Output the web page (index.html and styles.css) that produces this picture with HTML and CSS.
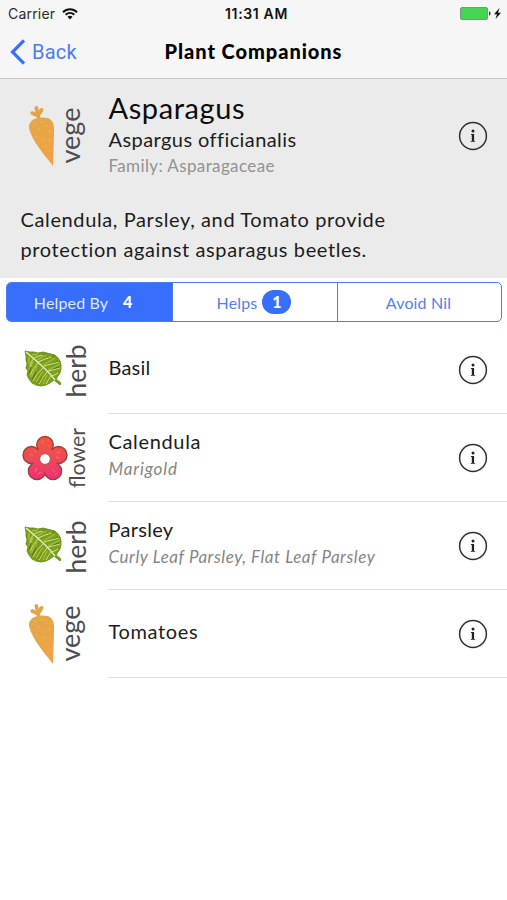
FILE: index.html
```html
<!DOCTYPE html>
<html lang="en">
<head>
<meta charset="utf-8">
<title>Plant Companions</title>
<link rel="stylesheet" href="styles.css">
</head>
<body>
<svg class="defs" width="0" height="0" aria-hidden="true">
  <defs>
    <linearGradient id="petal" x1="0" y1="22" x2="0" y2="66" gradientUnits="userSpaceOnUse">
      <stop offset="0" stop-color="#f4563f"/><stop offset=".5" stop-color="#ee4a55"/><stop offset="1" stop-color="#f02f78"/>
    </linearGradient>
    <linearGradient id="root" x1="0" y1="0" x2="1" y2="1">
      <stop offset="0" stop-color="#dfa94a"/><stop offset="1" stop-color="#f4a044"/>
    </linearGradient>
    <symbol id="carrot" viewBox="0 0 96 88">
      <path d="M38 28C38 25 35 24.500 31 22.500C29.500 20 31 18.500 33.500 19.500L36 20.500C34 17 34 14 36.500 14C38.500 14 38.500 17 38.500 19C39.500 16 42 15 43.500 17C43.500 19.500 41.500 22 40.500 23C39.500 25 40.500 26 41 28Z" fill="#e5a347"/>
      <path d="M30 31C33 25 47 24 51 28C55 32 54 38 54 44L53 74C47 66 36 54 31 42C29 37 28 34 30 31Z" fill="url(#root)"/>
      <path d="M35 31l1 1M42 29l1 2M47 33l-1 1M38 37l2 1M45 41l1-1M50 38l-1 2M36 44l1 1M42 48l2-1M49 47l1 2M45 54l1 1M50 59l-1 1M49 66l1 1" stroke="#f3bd69" stroke-width="1"/>
      <path d="M39 32l1 1M33 36l1 1M48 30l1 1M43 36l1 1M39 42l1 1M47 45l1 1M46 60l1 1M50 54l1 1" stroke="#d6963d" stroke-width=".8"/>
    </symbol>
    <symbol id="leaf" viewBox="0 0 96 88">
      <path d="M25 25L30 26L34 26L38 27L43 26L47 27L51 28L55 29L58 32L60 35L61 39L61 43L60 47L58 50L56 53L61 57L60 59L54 54L50 57L46 59L41 60L36 59L32 57L29 53L27 49L28 45L26 42L27 38L26 34L26 30Z" fill="#7c9f1c" stroke="#5f8214" stroke-width=".8"/>
      <path d="M29 31v7M33 36l-4 8M37 40l-6 11M43 45l-7 11M47 49l-4 9M32 29l6-1M37 34l9-5M43 39l12-7M48 44l12-6" fill="none" stroke="#a6c22f" stroke-width="1.300"/>
      <path d="M31 41l-2 7M36 46l-4 8M42 51l-3 6M41 29l4-1M48 33l6-3M52 38l7-3M52 44l7-3" fill="none" stroke="#567a10" stroke-width="1.100"/>
      <path d="M26 26C35 34 46 42 55 54" fill="none" stroke="#edf3c8" stroke-width="1.300"/>
      <path d="M33 33Q31 36 30 41M38 37Q33 42 30 49M43 42Q36 48 33 55M47 46Q42 52 39 58M51 50Q48 54 46 58M34 32Q38 30 43 29M38 36Q44 33 52 31M44 40Q52 38 59 36M48 45Q54 44 60 42M52 50Q55 49 58 47" fill="none" stroke="#dbe6a0" stroke-width=".9"/>
    </symbol>
    <symbol id="blossom" viewBox="0 0 96 88">
      <g fill="url(#petal)" stroke="#9b4038" stroke-width="1.400">
        <circle cx="45" cy="30.800" r="8.300"/><circle cx="31.500" cy="41" r="8.500"/><circle cx="58.500" cy="41" r="8.500"/><circle cx="37" cy="57" r="8.600"/><circle cx="53" cy="57" r="8.600"/>
      </g>
      <circle cx="45" cy="46" r="12" fill="url(#petal)"/>
      <path d="M41 29l3-2M48 31l2 2M30 40l3 2M34 37l2 1M57 39l3-1M56 43l4 1M37 54l-2 4M41 58l-3 2M52 55l3 3M55 61l2-2" stroke="#fb747d" stroke-width=".9"/>
      <circle cx="45" cy="45" r="5.400" fill="#fff" stroke="#a85250" stroke-width="1"/>
    </symbol>
    <symbol id="info" viewBox="0 0 30 30">
      <circle cx="15" cy="15" r="13.400" fill="none" stroke="#303030" stroke-width="1.500"/>
      <circle cx="15" cy="10" r="1.500" fill="#222"/>
      <path d="M13 13h3.100v6.900h1V20.800h-4.400v-.9h1.100v-6H13z" fill="#222"/>
    </symbol>
  </defs>
</svg>

<header class="top">
  <div class="status">
    <span class="carrier">Carrier</span>
    <svg class="wifi" width="16" height="12" viewBox="0 0 16 12"><path d="M1 4.200C5 .3 11 .3 15 4.200M3.600 6.800C6.200 4.400 9.800 4.400 12.400 6.800" fill="none" stroke="#111" stroke-width="1.900"/><path d="M5.500 8.700C7 7.500 9 7.500 10.500 8.700L8 11.400Z" fill="#111"/></svg>
    <span class="time">11:31 AM</span>
    <svg class="battery" width="44" height="14" viewBox="0 0 44 14"><rect x=".5" y=".5" width="27" height="12" rx="1.500" fill="#45d552" stroke="#7d9580"/><path d="M29 4.500c2 .5 2 3.500 0 4z" fill="#333"/><path d="M39.500 1L34 7.300h3L35.500 12L41 5.800h-3z" fill="#111"/></svg>
  </div>
  <nav class="nav">
    <a class="back"><svg width="16" height="26" viewBox="0 0 16 26"><path d="M15 1.500L3.500 13L15 24.500" fill="none" stroke="#3a70fb" stroke-width="3.200"/></svg><span>Back</span></a>
    <h1 class="title">Plant Companions</h1>
  </nav>
</header>

<section class="plant">
  <div class="row summary">
    <svg class="kind" viewBox="0 0 96 88"><use href="#carrot"/><text transform="translate(79.500 71.500) rotate(-90)" font-size="26" textLength="56" lengthAdjust="spacingAndGlyphs">vege</text></svg>
    <div class="text">
      <h2 class="common">Asparagus</h2>
      <p class="latin">Aspargus officianalis</p>
      <p class="family">Family: Asparagaceae</p>
    </div>
    <svg class="info"><use href="#info"/></svg>
  </div>
  <p class="note">Calendula, Parsley, and Tomato provide<br>protection against asparagus beetles.</p>
</section>

<div class="segments">
  <div class="segment active"><span>Helped By</span><b class="count">4</b></div>
  <div class="segment"><span>Helps</span><b class="count">1</b></div>
  <div class="segment"><span>Avoid Nil</span></div>
</div>

<main class="list">
  <div class="row">
    <svg class="kind" viewBox="0 0 96 88"><use href="#leaf"/><text transform="translate(86 71.500) rotate(-90)" font-size="27" textLength="53" lengthAdjust="spacingAndGlyphs">herb</text></svg>
    <div class="text"><p class="name basil">Basil</p></div>
    <svg class="info"><use href="#info"/></svg>
  </div>
  <div class="row">
    <svg class="kind" viewBox="0 0 96 88"><use href="#blossom"/><text transform="translate(85 74) rotate(-90)" font-size="22" textLength="60" lengthAdjust="spacingAndGlyphs">flower</text></svg>
    <div class="text"><p class="name calendula">Calendula</p><p class="alias marigold">Marigold</p></div>
    <svg class="info"><use href="#info"/></svg>
  </div>
  <div class="row">
    <svg class="kind" viewBox="0 0 96 88"><use href="#leaf"/><text transform="translate(86 71.500) rotate(-90)" font-size="27" textLength="53" lengthAdjust="spacingAndGlyphs">herb</text></svg>
    <div class="text"><p class="name parsley">Parsley</p><p class="alias">Curly Leaf Parsley, Flat Leaf Parsley</p></div>
    <svg class="info"><use href="#info"/></svg>
  </div>
  <div class="row">
    <svg class="kind" viewBox="0 0 96 88"><use href="#carrot"/><text transform="translate(79.500 71.500) rotate(-90)" font-size="26" textLength="56" lengthAdjust="spacingAndGlyphs">vege</text></svg>
    <div class="text"><p class="name tomatoes">Tomatoes</p></div>
    <svg class="info"><use href="#info"/></svg>
  </div>
</main>
</body>
</html>
```

FILE: styles.css
```css
* { box-sizing: border-box; margin: 0; padding: 0; }
body { width: 507px; height: 900px; overflow: hidden; background: #fff; color: #1c1c1c; font-family: Lato, "Liberation Sans", sans-serif; }
.defs { position: absolute; }
svg { display: block; flex: none; }
p, h1, h2 { font-weight: 400; white-space: nowrap; }

.top { height: 79px; background: #f6f6f6; border-bottom: 1px solid #c9c9c9; }
.status { height: 28px; display: flex; align-items: center; padding: 0 3px 0 8px; font: 14px/28px Inter, sans-serif; color: #111; }
.carrier { width: 54px; color: #2b2b2b; letter-spacing: .2px; }
.time { margin-left: 147px; font-weight: 600; font-size: 14px; letter-spacing: .65px; flex: 1; }
.nav { display: grid; grid-template-columns: 1fr auto 1fr; align-items: center; height: 47px; }
.back { display: flex; align-items: center; gap: 7px; padding-left: 9px; color: #4a7cf6; font: 20px/26px Roboto, sans-serif; letter-spacing: .25px; }
.title { font-size: 20px; line-height: 26px; font-weight: 900; color: #000; letter-spacing: .95px; margin-top: -2px; }

.plant { height: 199px; background: #ebebeb; padding-top: 13px; }
.row { display: flex; align-items: center; height: 88px; padding-right: 19px; position: relative; }
.kind { width: 96px; height: 88px; margin-right: 12.500px; }
.kind text { font-family: Lato, sans-serif; fill: #4e4e50; }
.info { width: 30px; height: 30px; margin-left: auto; }
.common { font-size: 29px; line-height: 34px; color: #0c0c0c; letter-spacing: .58px; margin-top: -2px; }
.latin { font-size: 20px; line-height: 28px; letter-spacing: .42px; }
.family { font-size: 17px; line-height: 26px; color: #929292; letter-spacing: .38px; }
.note { padding: 25px 0 0 20.500px; font-size: 20px; line-height: 29.500px; letter-spacing: .62px; }

.segments { display: grid; grid-template-columns: 165px 165px 1fr; height: 40px; margin: 4px 5px 4px 6px; border: 1px solid #4a7cf6; border-radius: 5px; overflow: hidden; }
.segment { display: flex; align-items: center; justify-content: center; color: #5480ee; font-size: 16px; gap: 5px; padding-right: 2px; }
.segment + .segment { border-left: 1px solid #4a7cf6; }
.segment span { letter-spacing: .15px; }
.active { background: #376ffc; color: #dfe8ff; padding-right: 3px; }
.count { background: #376ffc; color: #fff; width: 29px; height: 24px; border-radius: 12px; line-height: 24px; text-align: center; font-weight: 900; }

.list .row::after { content: ""; position: absolute; left: 108px; right: 0; bottom: 0; height: 1px; background: #dedede; }
.list .text { padding-bottom: 7px; }
.name { font-size: 20px; line-height: 28px; letter-spacing: .65px; }
.basil { letter-spacing: .2px; }
.parsley { letter-spacing: .3px; }
.alias { font-size: 17px; line-height: 28px; font-style: italic; color: #858585; letter-spacing: .55px; }
.marigold { letter-spacing: .85px; }
```
